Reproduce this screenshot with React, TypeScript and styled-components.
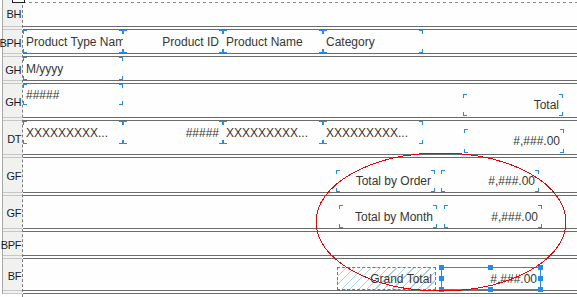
import React from "react";
import styled, { createGlobalStyle, css } from "styled-components";

const BLUE = "#1f8cf4";
const LINE = "#6c6c6c";

type Align = "left" | "right";
type Kind = "plain" | "hatched" | "selected";

interface Field {
  x: number;
  y: number;
  w: number;
  h: number;
  text: string;
  align?: Align;
  kind?: Kind;
}

interface Band {
  label: string;
  height: number;
  fields: Field[];
}

const col = (x: number, text: string, align: Align = "left"): Field => ({
  x,
  y: 0,
  w: 100,
  h: 23,
  text,
  align,
});

const bands: Band[] = [
  { label: "BH", height: 26, fields: [] },
  {
    label: "BPH",
    height: 23,
    fields: [
      col(0, "Product Type Name"),
      col(100, "Product ID", "right"),
      col(200, "Product Name"),
      col(300, "Category"),
    ],
  },
  { label: "GH", height: 23, fields: [col(0, "M/yyyy")] },
  {
    label: "GH",
    height: 33,
    fields: [
      { x: 0, y: 0, w: 100, h: 21, text: "#####" },
      { x: 440, y: 10, w: 100, h: 22, text: "Total", align: "right" },
    ],
  },
  {
    label: "DT",
    height: 33,
    fields: [
      col(0, "XXXXXXXXX..."),
      col(100, "#####", "right"),
      col(200, "XXXXXXXXX..."),
      col(300, "XXXXXXXXX..."),
      { x: 441, y: 8, w: 100, h: 24, text: "#,###.00", align: "right" },
    ],
  },
  {
    label: "GF",
    height: 34,
    fields: [
      { x: 313, y: 12, w: 99, h: 22, text: "Total by Order", align: "right" },
      { x: 418, y: 12, w: 98, h: 22, text: "#,###.00", align: "right" },
    ],
  },
  {
    label: "GF",
    height: 32,
    fields: [
      { x: 316, y: 9, w: 98, h: 23, text: "Total by Month", align: "right" },
      { x: 421, y: 9, w: 98, h: 23, text: "#,###.00", align: "right" },
    ],
  },
  { label: "BPF", height: 23, fields: [] },
  {
    label: "BF",
    height: 31,
    fields: [
      { x: 314, y: 8, w: 99, h: 23, text: "Grand Total", align: "right", kind: "hatched" },
      { x: 418, y: 8, w: 100, h: 23, text: "#,###.00", align: "right", kind: "selected" },
    ],
  },
];

const GlobalStyle = createGlobalStyle`
  html, body {
    margin: 0;
    padding: 0;
    background: #ffffff;
  }
  body {
    font-family: "Liberation Sans", Arial, sans-serif;
  }
`;

const Page = styled.div`
  position: relative;
  display: flex;
  width: 577px;
  height: 297px;
  overflow: hidden;
  background: #fdfefd;
`;

const GutterColumn = styled.div`
  width: 20px;
  margin-left: 2px;
  height: 100%;
  border-right: 1px dashed #7e7e7e;
  flex-shrink: 0;
`;

const GutterStack = styled.div`
  display: flex;
  flex-direction: column;
  border-left: 1px solid #a9a9a9;
  background: #f1f1ef;
`;

const Label = styled.div<{ $h: number }>`
  height: ${({ $h }) => $h}px;
  display: flex;
  align-items: center;
  justify-content: flex-end;
  padding: 2px 1px 0 0;
  box-sizing: border-box;
  font-size: 11px;
  color: #1a1a2c;
  letter-spacing: -0.4px;
  white-space: nowrap;
`;

const GutterSep = styled.div`
  height: 2px;
  border-top: 1px solid #c6c6c6;
  border-bottom: 1px solid #c6c6c6;
`;

const Canvas = styled.div`
  flex: 1;
  display: flex;
  flex-direction: column;
`;

const BandArea = styled.div<{ $h: number }>`
  position: relative;
  height: ${({ $h }) => $h}px;

  &:first-child {
    background: linear-gradient(to right, #8a8a8a 50%, transparent 0) 0 2px / 6px 1px repeat-x;
  }
`;

const BandSep = styled.div`
  height: 2px;
  border-top: 1px solid ${LINE};
  border-bottom: 1px solid ${LINE};
`;

const mark = (pos: string, w: number, h: number) =>
  `linear-gradient(${BLUE}, ${BLUE}) ${pos} / ${w}px ${h}px no-repeat`;

const corners = [
  mark("left top", 4, 1),
  mark("left top", 1, 4),
  mark("right top", 4, 1),
  mark("right top", 1, 4),
  mark("left bottom", 4, 1),
  mark("left bottom", 1, 4),
  mark("right bottom", 4, 1),
  mark("right bottom", 1, 4),
].join(",\n");

const Cell = styled.div<{ $x: number; $y: number; $w: number; $h: number; $align: Align; $kind: Kind }>`
  position: absolute;
  left: ${({ $x }) => $x}px;
  top: ${({ $y }) => $y}px;
  width: ${({ $w }) => $w}px;
  height: ${({ $h }) => $h}px;
  box-sizing: border-box;
  display: flex;
  align-items: center;
  justify-content: ${({ $align }) => ($align === "right" ? "flex-end" : "flex-start")};
  padding: ${({ $align }) => ($align === "right" ? "0 4px 0 0" : "0 0 0 3px")};
  overflow: hidden;
  white-space: nowrap;
  font-size: 12px;
  color: #363636;

  ${({ $kind }) =>
    $kind === "plain" &&
    css`
      background: ${corners};
    `}

  ${({ $kind }) =>
    $kind === "hatched" &&
    css`
      border: 1px dashed ${BLUE};
      padding-right: 3px;
      background: repeating-linear-gradient(
        135deg,
        transparent 0 5px,
        #a6cdf2 5px 6px
      );
    `}

  ${({ $kind }) =>
    $kind === "selected" &&
    css`
      overflow: visible;
      border: 1px solid ${BLUE};
      padding-right: 3px;
    `}
`;

type HandlePos = "tl" | "tm" | "tr" | "ml" | "mr" | "bl" | "bm" | "br";

const handlePlace: Record<HandlePos, string> = {
  tl: "left: -3px; top: -3px;",
  tm: "left: calc(50% - 3px); top: -3px;",
  tr: "right: -3px; top: -3px;",
  ml: "left: -3px; top: calc(50% - 3px);",
  mr: "right: -3px; top: calc(50% - 3px);",
  bl: "left: -3px; bottom: -3px;",
  bm: "left: calc(50% - 3px); bottom: -3px;",
  br: "right: -3px; bottom: -3px;",
};

const Handle = styled.span<{ $pos: HandlePos }>`
  position: absolute;
  width: 5px;
  height: 5px;
  background: ${BLUE};
  ${({ $pos }) => handlePlace[$pos]}
`;

const CornerButton = styled.div`
  position: absolute;
  left: 12px;
  top: -8px;
  width: 11px;
  height: 9px;
  border: 1px solid #222;
  background: #fff;
`;

const Overlay = styled.svg`
  position: absolute;
  left: 0;
  top: 0;
  pointer-events: none;
`;

const handles: HandlePos[] = ["tl", "tm", "tr", "ml", "mr", "bl", "bm", "br"];

const App: React.FC = () => (
  <>
    <GlobalStyle />
    <Page>
      <GutterColumn>
        <GutterStack>
          {bands.map((b, i) => (
            <React.Fragment key={i}>
              <Label $h={b.height}>{b.label}</Label>
              <GutterSep />
            </React.Fragment>
          ))}
        </GutterStack>
      </GutterColumn>
      <Canvas>
        {bands.map((b, i) => (
          <React.Fragment key={i}>
            <BandArea $h={b.height}>
              {b.fields.map((f, j) => (
                <Cell
                  key={j}
                  $x={f.x}
                  $y={f.y}
                  $w={f.w}
                  $h={f.h}
                  $align={f.align ?? "left"}
                  $kind={f.kind ?? "plain"}
                >
                  {f.text}
                  {f.kind === "selected" && handles.map((p) => <Handle key={p} $pos={p} />)}
                </Cell>
              ))}
            </BandArea>
            <BandSep />
          </React.Fragment>
        ))}
      </Canvas>
      <CornerButton />
      <Overlay width={577} height={297} viewBox="0 0 577 297">
        <ellipse
          cx={441}
          cy={222}
          rx={125}
          ry={69}
          fill="none"
          stroke="#ee0000"
          strokeWidth={1}
          shapeRendering="crispEdges"
        />
      </Overlay>
    </Page>
  </>
);

export default App;
